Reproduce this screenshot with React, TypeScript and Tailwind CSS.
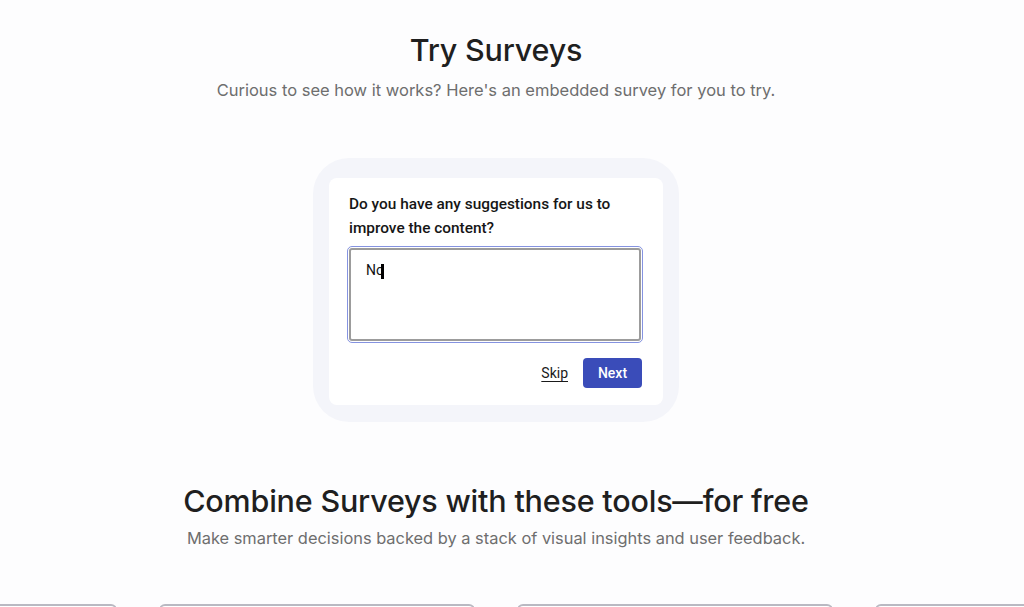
export default function App() {
  const cards = [0, 1, 2, 3];
  return (
    <div className="w-[1024px] h-[607px] overflow-hidden bg-[#fdfdfe] font-['Inter',sans-serif]">
      <section className="flex flex-col items-center pt-[31px] pr-[32px]">
        <h1 className="text-[30.5px] leading-[38px] font-medium text-[#1f1f1f] tracking-[-0.2px]">Try Surveys</h1>
        <p className="mt-[9px] text-[16.5px] leading-[24px] text-[#6e6e6e]">
          Curious to see how it works? Here's an embedded survey for you to try.
        </p>

        <div className="mt-[56px] w-[366px] rounded-[36px] bg-[#f4f5fa] pt-[20px] pb-[17px] px-[16px]">
          <div className="rounded-[8px] bg-white pl-[18px] pr-[20px] pt-[14px] pb-[17px] font-['Roboto',sans-serif]">
            <p className="text-[15.4px] leading-[24px] font-medium text-[#161616] pl-[2px]">
              Do you have any suggestions for us to improve the content?
            </p>
            <div className="mt-[6px] h-[97px] rounded-[5px] border-[1.5px] border-[#8593e0] p-[1px]">
              <div className="h-full rounded-[3px] border-2 border-[#9c9c9c] bg-white px-[15px] pt-[8px]">
                <span className="text-[14px] leading-[20px] text-[#111]">N</span>
                <span className="text-[14px] leading-[20px] text-[#111] relative">o<span className="absolute left-[5px] top-[2px] w-[3px] h-[15px] bg-black" /></span>
              </div>
            </div>
            <div className="mt-[15px] flex items-center justify-end gap-[15px] pr-[1px]">
              <span className="text-[14px] text-[#1a1a1a] underline underline-offset-[3px]">Skip</span>
              <button className="h-[30px] w-[59px] rounded-[4px] bg-[#3a4cb9] text-[14px] font-medium text-white">Next</button>
            </div>
          </div>
        </div>

        <h2 className="mt-[60px] text-[30.5px] leading-[38px] font-medium text-[#1f1f1f] tracking-[-0.2px]">
          Combine Surveys with these tools—for free
        </h2>
        <p className="mt-[6px] text-[16.4px] leading-[24px] text-[#6e6e6e]">
          Make smarter decisions backed by a stack of visual insights and user feedback.
        </p>
      </section>

      <div className="mt-[54px] flex gap-[42px] ml-[-199px]">
        {cards.map((c) => (
          <div key={c} className="shrink-0 w-[316px] h-[200px] rounded-[6px] border-2 border-[#b9b9c2] bg-white" />
        ))}
      </div>
    </div>
  );
}
